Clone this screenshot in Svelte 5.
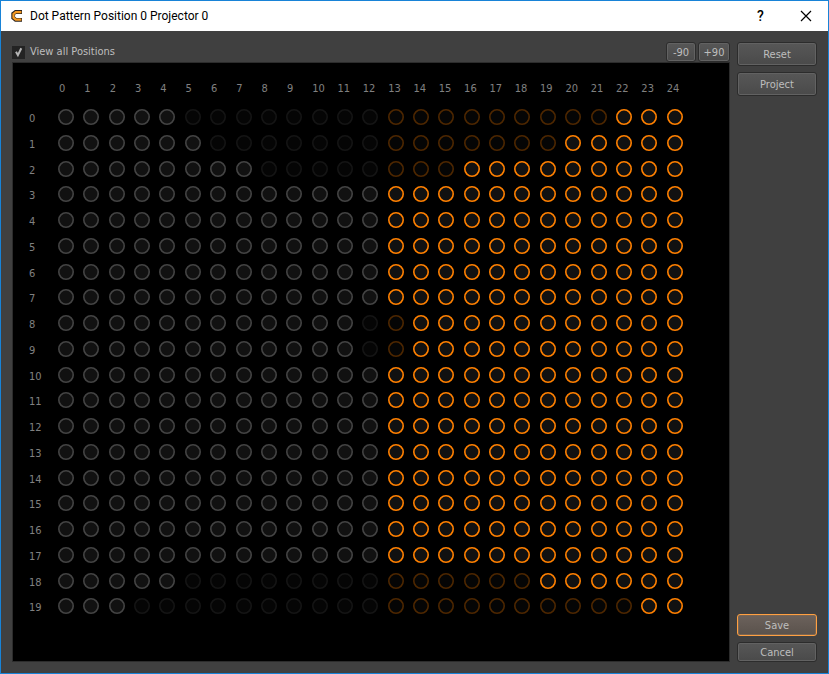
<script lang="ts">
  const COLS = 25;
  const SPLIT = 13; // first column of the highlighted projector half

  // Visible dots run from the left edge up to `left`, and from `right` to the end.
  const bounds: [number, number][] = [
    [5, 22], [6, 20], [8, 16],
    [13, 13], [13, 13], [13, 13], [13, 13], [13, 13],
    [12, 14], [12, 14],
    [13, 13], [13, 13], [13, 13], [13, 13], [13, 13], [13, 13], [13, 13], [13, 13],
    [5, 19], [3, 23],
  ];

  const cols = Array.from({ length: COLS }, (_, i) => i);
  const initial = () => bounds.map(([left, right]) => cols.map((c) => c < left || c >= right));

  let dots = $state(initial());
  let viewAll = $state(true);

  const reset = () => (dots = initial());
  const toggle = (r: number, c: number) => (dots[r][c] = !dots[r][c]);
</script>

<div class="window">
  <header class="titlebar">
    <svg class="logo" viewBox="0 0 12 12" aria-hidden="true">
      <path d="M11 2H4.6L2.2 3.8V7.8L4.6 9.8H11" fill="none" stroke="#2b2420" stroke-width="3.8" />
      <path d="M10.4 2.2H4.8L2.5 4V7.7L4.8 9.6H10.4" fill="none" stroke="#f59a22" stroke-width="2.2" />
    </svg>
    <h1>Dot Pattern Position 0 Projector 0</h1>
    <button type="button" class="sys help" aria-label="Help">?</button>
    <button type="button" class="sys" aria-label="Close">
      <svg viewBox="0 0 12 12" aria-hidden="true"><path d="M1 1L11 11M11 1L1 11" stroke="#000" stroke-width="1.2" /></svg>
    </button>
  </header>

  <div class="body">
    <main>
      <div class="toolbar">
        <label>
          <input type="checkbox" bind:checked={viewAll} />
          <svg class="tick" viewBox="0 0 13 13" aria-hidden="true">
            {#if viewAll}<path d="M4 5.8L5.9 9.2L9.3 2.2" />{/if}
          </svg>
          View all Positions
        </label>
        <button type="button" class="btn small">-90</button>
        <button type="button" class="btn small">+90</button>
      </div>

      <div class="panel">
        <div class="cols">
          {#each cols as c}<span>{c}</span>{/each}
        </div>
        <div class="rows">
          {#each dots as row, r}
            <span class="rowlabel">{r}</span>
            {#each row as on, c}
              <button
                type="button"
                class="dot"
                class:hot={c >= SPLIT}
                class:off={!on}
                aria-label="Dot {r}, {c}"
                aria-pressed={on}
                onclick={() => toggle(r, c)}
              >
                <svg viewBox="0 0 16 16"><circle cx="8" cy="8" r="7.2" /></svg>
              </button>
            {/each}
          {/each}
        </div>
      </div>
    </main>

    <aside>
      <button type="button" class="btn tall" onclick={reset}>Reset</button>
      <button type="button" class="btn tall">Project</button>
      <span class="spacer"></span>
      <button type="button" class="btn primary">Save</button>
      <button type="button" class="btn">Cancel</button>
    </aside>
  </div>
</div>

<style>
  .window {
    display: flex;
    flex-direction: column;
    box-sizing: border-box;
    min-height: 100vh;
    border: 1px solid #1883d7;
    background: #404040;
    color: #bebebe;
    font-family: "DejaVu Sans Condensed", Tahoma, sans-serif;
    font-size: 11px;
    line-height: 16px;
  }
  button {
    font: inherit;
    padding: 0;
  }
  .titlebar {
    display: flex;
    align-items: center;
    height: 30px;
    padding-left: 10px;
    background: #fff;
    color: #000;
    font-family: Roboto, "Noto Sans", sans-serif;
  }
  .logo {
    width: 12px;
    height: 12px;
    margin-right: 7px;
  }
  h1 {
    flex: 1;
    margin: 0;
    font-size: 12px;
    font-weight: 400;
  }
  .sys {
    display: flex;
    align-items: center;
    justify-content: center;
    width: 45px;
    height: 30px;
    border: 0;
    background: none;
    color: #000;
  }
  .sys svg {
    width: 12px;
    height: 12px;
  }
  .help {
    font-size: 14px;
    font-weight: 500;
  }
  .body {
    flex: 1;
    display: flex;
    gap: 7px;
    padding: 11px;
  }
  main {
    flex: 1;
    display: flex;
    flex-direction: column;
  }
  .toolbar {
    display: flex;
    gap: 2px;
    height: 20px;
  }
  label {
    position: relative;
    flex: 1;
    display: flex;
    align-items: center;
    gap: 5px;
  }
  input {
    position: absolute;
    width: 13px;
    height: 13px;
    margin: 0;
    opacity: 0;
  }
  .tick {
    width: 13px;
    height: 13px;
    background: #232323;
  }
  .tick path {
    fill: none;
    stroke: #b4b4b4;
    stroke-width: 2;
  }
  .btn {
    box-sizing: border-box;
    height: 20px;
    padding-top: 2px;
    border: 1px solid #2c2c2c;
    border-radius: 3px;
    background: linear-gradient(#575757, #4a4a4a);
    box-shadow: inset 0 0 0 1px #626262;
    color: #bebebe;
    line-height: 16px;
  }
  .btn.small {
    width: 30px;
  }
  .btn.small + .btn.small {
    width: 32px;
  }
  .btn.tall {
    height: 24px;
  }
  .btn.primary {
    height: 22px;
    border-color: #ffa042;
    background: linear-gradient(#6c625c, #5a524c);
    box-shadow: inset 0 0 0 1px #7a6552;
  }
  .panel {
    flex: 1;
    display: flex;
    flex-direction: column;
    padding: 18px 37px 37px 16px;
    border: 1px solid #2c2c2c;
    background: #000;
    color: #808080;
  }
  .cols {
    display: grid;
    grid-template-columns: repeat(25, 1fr);
    height: 28px;
    padding-left: 30px;
  }
  .rows {
    flex: 1;
    display: grid;
    grid-template-columns: 29px repeat(25, 1fr);
    grid-template-rows: repeat(20, 1fr);
  }
  .rowlabel {
    padding-top: 2px;
  }
  .dot {
    justify-self: start;
    align-self: start;
    width: 16px;
    height: 16px;
    border: 0;
    background: none;
    color: #444;
  }
  .dot svg {
    display: block;
    width: 16px;
    height: 16px;
  }
  .dot circle {
    fill: #111;
    stroke: currentColor;
    stroke-width: 1.6;
  }
  .dot.hot {
    color: #ff8000;
  }
  .dot.off {
    opacity: 0.3;
  }
  aside {
    display: flex;
    flex-direction: column;
    gap: 6px;
    width: 80px;
  }
  .spacer {
    flex: 1;
  }
</style>
